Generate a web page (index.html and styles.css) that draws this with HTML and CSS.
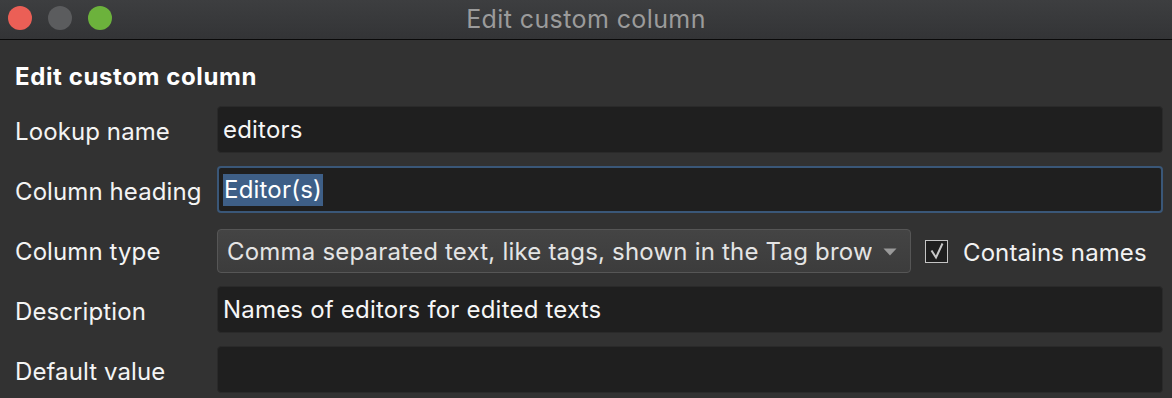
FILE: index.html
```html
<!DOCTYPE html>
<html>
<head>
<meta charset="utf-8">
<link rel="stylesheet" href="styles.css">
</head>
<body>
<div class="window">
  <div class="titlebar">
    <div class="lights">
      <span class="light red"></span>
      <span class="light grey"></span>
      <span class="light green"></span>
    </div>
    <div class="title">Edit custom column</div>
  </div>
  <div class="content">
    <h1 class="heading">Edit custom column</h1>
    <div class="form">
      <label class="label">Lookup name</label>
      <div class="field">editors</div>

      <label class="label">Column heading</label>
      <div class="field focused"><span class="sel">Editor(s)</span></div>

      <label class="label">Column type</label>
      <div class="typerow">
        <div class="combo">
          <span class="combo-text">Comma separated text, like tags, shown in the Tag browser</span>
          <svg class="arrow" width="14" height="8" viewBox="0 0 14 8"><path d="M0.5 0.5 L13.5 0.5 L7 7.5 Z" fill="#9a9a9a"/></svg>
        </div>
        <div class="check">
          <span class="box">
            <svg width="18" height="18" viewBox="0 0 18 18"><path d="M3.5 8.5 L8 15.5 L14.5 1.5" fill="none" stroke="#c8c8c8" stroke-width="2" stroke-linejoin="miter"/></svg>
          </span>
          <span class="check-label">Contains names</span>
        </div>
      </div>

      <label class="label">Description</label>
      <div class="field">Names of editors for edited texts</div>

      <label class="label">Default value</label>
      <div class="field"></div>
    </div>
  </div>
</div>
</body>
</html>
```

FILE: styles.css
```css
* { box-sizing: border-box; }
html, body {
  margin: 0;
  padding: 0;
  background: #323232;
}
body {
  width: 1172px;
  height: 398px;
  overflow: hidden;
  font-family: Inter, "Noto Sans", "Liberation Sans", sans-serif;
  color: #f2f2f2;
}
.window {
  display: flex;
  flex-direction: column;
  height: 398px;
}
.titlebar {
  height: 40px;
  flex: none;
  display: flex;
  align-items: center;
  position: relative;
  background: linear-gradient(#3d3e40, #333436);
  border-bottom: 1px solid #0a0a0a;
}
.lights {
  display: flex;
  gap: 16px;
  padding-left: 8px;
  margin-top: -4px;
}
.light {
  width: 24px;
  height: 24px;
  border-radius: 50%;
  display: block;
}
.red { background: #eb5f56; }
.grey { background: #5b5c5e; }
.green { background: #6cb23c; }
.title {
  position: absolute;
  left: 0;
  right: 0;
  top: 4px;
  text-align: center;
  font-size: 25px;
  letter-spacing: 0.4px;
  line-height: 30px;
  color: #9b9b9b;
}
.content {
  padding: 22px 9px 0 15px;
}
.heading {
  margin: 0 0 14px 0;
  font-size: 24px;
  letter-spacing: 0.6px;
  line-height: 30px;
  font-weight: 700;
  color: #ffffff;
}
.form {
  display: grid;
  grid-template-columns: 202px 1fr;
  grid-auto-rows: 47px;
  row-gap: 13px;
  align-items: center;
}
.label {
  font-size: 24px;
  letter-spacing: 0.1px;
  padding-top: 3px;
  color: #f4f4f4;
}
.field {
  height: 47px;
  background: #1f1f1f;
  border: 1px solid #2a2a2a;
  border-radius: 4px;
  font-size: 24px;
  letter-spacing: 0.2px;
  line-height: 46px;
  padding-left: 5px;
  color: #f6f6f6;
}
.field.focused {
  border: 2px solid #3a5778;
  line-height: 43px;
  padding-left: 4px;
}
.sel {
  background: #3e5f87;
  color: #ffffff;
  display: inline-block;
  line-height: 32px;
  padding: 0 1px;
}
.typerow {
  display: flex;
  align-items: center;
  gap: 14px;
  height: 47px;
}
.combo {
  width: 694px;
  height: 44px;
  margin-top: 3px;
  background: linear-gradient(#444444, #3c3c3c);
  border: 1px solid #565656;
  border-radius: 4px;
  display: flex;
  align-items: center;
  padding: 1px 13px 0 9px;
  gap: 11px;
  font-size: 24px;
  letter-spacing: 0.2px;
  color: #e4e4e4;
}
.combo-text {
  flex: 1;
  overflow: hidden;
  white-space: nowrap;
}
.arrow { flex: none; }
.check {
  display: flex;
  align-items: center;
  gap: 15px;
  margin-top: 3px;
}
.box {
  width: 23px;
  height: 23px;
  border: 1.5px solid #c4c4c4;
  background: #1e1e1e;
  display: flex;
  align-items: center;
  justify-content: center;
}
.check-label {
  font-size: 24px;
  letter-spacing: 0.1px;
  padding-top: 2px;
  color: #f2f2f2;
}
```
